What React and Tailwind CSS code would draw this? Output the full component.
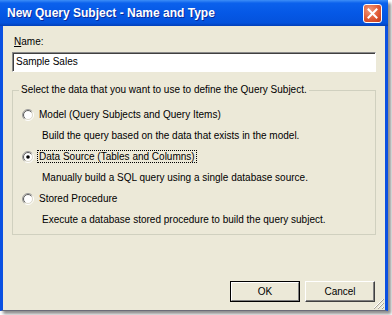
import React from 'react';

const font = { fontFamily: '"Liberation Sans", Arial, sans-serif' };

const Radio = ({ checked }) => (
  <svg width="12" height="12" viewBox="0 0 12 12" className="shrink-0">
    <defs>
      <linearGradient id="radioOuter" x1="0" y1="0" x2="1" y2="1">
        <stop offset="0.45" stopColor="#9a9a9a" />
        <stop offset="0.6" stopColor="#ffffff" />
      </linearGradient>
      <linearGradient id="radioInner" x1="0" y1="0" x2="1" y2="1">
        <stop offset="0.45" stopColor="#5a5a5a" />
        <stop offset="0.6" stopColor="#dcd9cc" />
      </linearGradient>
    </defs>
    <circle cx="6" cy="6" r="5.5" fill="none" stroke="url(#radioOuter)" />
    <circle cx="6" cy="6" r="4.5" fill="#ffffff" stroke="url(#radioInner)" />
    {checked && <circle cx="6" cy="6" r="1.8" fill="#000000" />}
  </svg>
);

const Option = ({ label, description, checked, focused }) => (
  <>
    <div className="h-[21px] flex items-center gap-[3px] pl-[9px]">
      <Radio checked={checked} />
      <span
        className={
          focused
            ? 'border border-dotted border-black px-[1px] leading-[11px]'
            : 'border border-transparent px-[1px] leading-[11px]'
        }
      >
        {label}
      </span>
    </div>
    <div className="h-[21px] flex items-center pl-[29px]">{description}</div>
  </>
);

export default function App() {
  return (
    <div className="w-[392px] h-[315px] bg-white" style={font}>
      <div className="w-[388px] h-[311px] flex flex-col shadow-[3px_3px_3px_rgba(0,0,0,0.45)]">
        {/* Title bar */}
        <div className="h-[26px] shrink-0 flex items-center justify-between pl-[7px] pr-[6px] bg-[linear-gradient(to_bottom,#3d8ef7_0%,#0b61ec_12%,#0558e6_50%,#0452dc_88%,#0340b8_100%)]">
          <span className="text-white font-bold text-[12px] leading-[14px] [text-shadow:1px_1px_0_#0a2a9a]">
            New Query Subject - Name and Type
          </span>
          <div className="w-[19px] h-[19px] rounded-[3px] border border-white flex items-center justify-center bg-[radial-gradient(circle_at_35%_30%,#f29a7c_0%,#e05a35_55%,#c0381a_100%)]">
            <svg width="11" height="11" viewBox="0 0 11 11">
              <path d="M1.5 1.5 L9.5 9.5 M9.5 1.5 L1.5 9.5" stroke="#ffffff" strokeWidth="2" strokeLinecap="square" />
            </svg>
          </div>
        </div>

        {/* Client area */}
        <div className="relative flex-1 flex flex-col bg-[#ece9d8] border-l-[3px] border-r-[3px] border-b border-l-[#0a50e2] border-r-[#0a50e2] border-b-[#6c6c78] px-[9px] pt-[10px] pb-[8px] text-[10px] text-black">
          <div className="h-[12px] leading-[12px] pl-[2px]">
            <span className="underline">N</span>ame:
          </div>
          <div className="mt-[4px] h-[20px] flex items-center bg-white border border-t-[#8a8a8a] border-l-[#8a8a8a] border-b-white border-r-white shadow-[inset_1px_1px_0_#404040] pl-[3px] leading-[12px]">
            Sample Sales
          </div>

          <fieldset className="mt-[12px] border border-[#d0d0bf] pt-[8px] pb-[4px] m-0">
            <legend className="ml-[6px] px-[2px] leading-[12px]">
              Select the data that you want to use to define the Query Subject.
            </legend>
            <Option
              label="Model (Query Subjects and Query Items)"
              description="Build the query based on the data that exists in the model."
            />
            <Option
              checked
              focused
              label="Data Source (Tables and Columns)"
              description="Manually build a SQL query using a single database source."
            />
            <Option
              label="Stored Procedure"
              description="Execute a database stored procedure to build the query subject."
            />
          </fieldset>

          <div className="flex-1" />

          <div className="flex justify-end gap-[5px] pr-[1px]">
            <button className="w-[70px] h-[21px] bg-[#ece9d8] border border-black flex items-center justify-center">
              <span className="w-full h-full flex items-center justify-center border border-t-white border-l-white border-b-[#808080] border-r-[#808080] leading-[12px]">
                OK
              </span>
            </button>
            <button className="w-[70px] h-[21px] bg-[#ece9d8] border border-t-white border-l-white border-b-[#404040] border-r-[#404040] shadow-[inset_-1px_-1px_0_#808080] flex items-center justify-center leading-[12px]">
              Cancel
            </button>
          </div>

          {/* Size grip */}
          <svg className="absolute right-[1px] bottom-[1px]" width="12" height="12" viewBox="0 0 12 12">
            <path d="M11 2 L2 11 M11 6 L6 11 M11 10 L10 11" stroke="#ffffff" strokeWidth="1" />
            <path d="M12 2 L2 12 M12 6 L6 12 M12 10 L10 12" stroke="#a8a497" strokeWidth="1" />
          </svg>
        </div>
      </div>
    </div>
  );
}
